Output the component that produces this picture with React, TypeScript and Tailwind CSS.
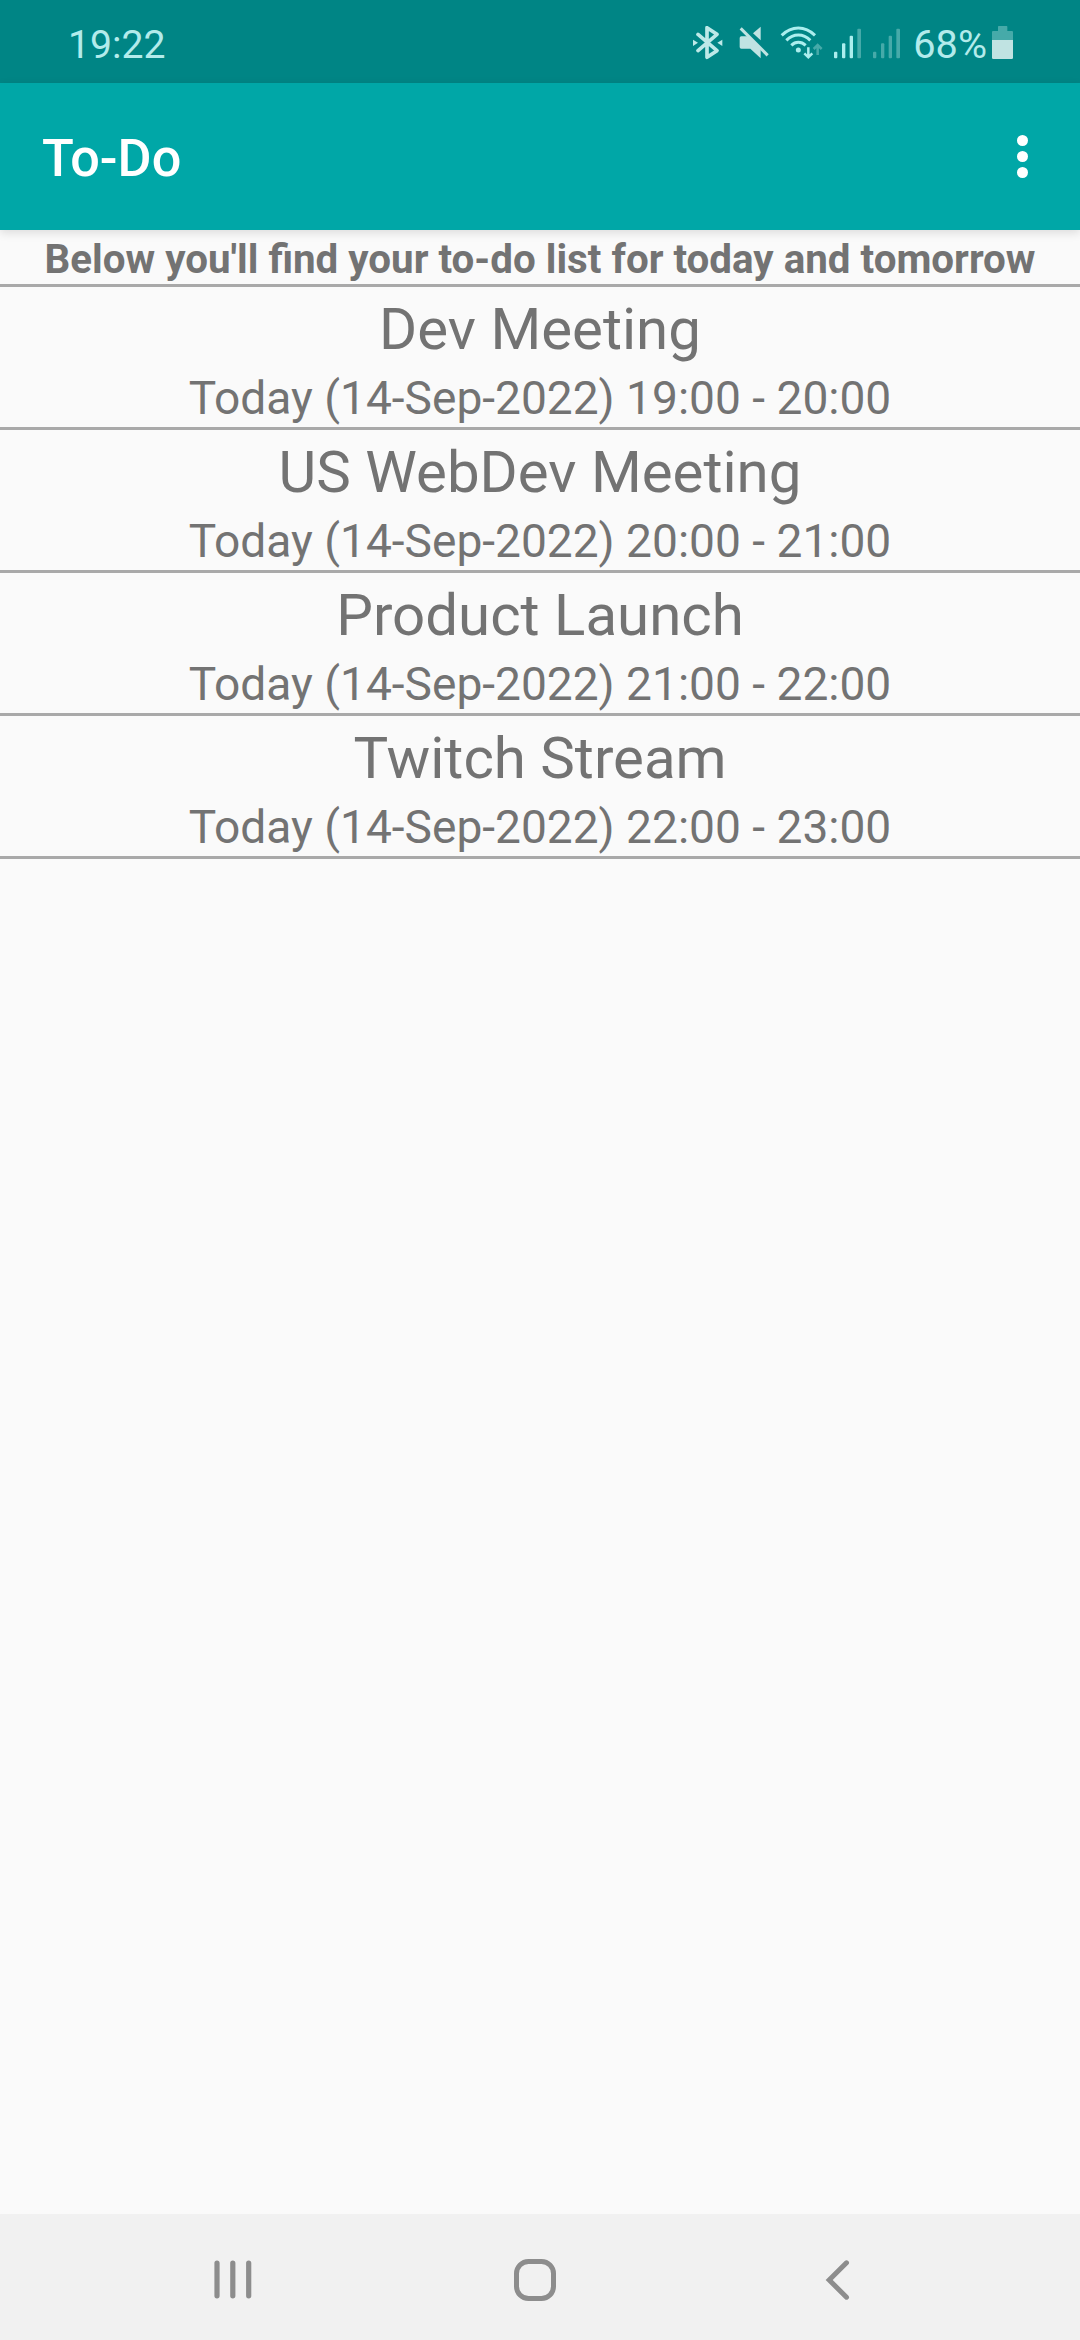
import React from 'react';

const events = [
    { title: 'Dev Meeting', time: 'Today (14-Sep-2022) 19:00 - 20:00' },
    { title: 'US WebDev Meeting', time: 'Today (14-Sep-2022) 20:00 - 21:00' },
    { title: 'Product Launch', time: 'Today (14-Sep-2022) 21:00 - 22:00' },
    { title: 'Twitch Stream', time: 'Today (14-Sep-2022) 22:00 - 23:00' },
];

const BluetoothIcon = () => (
    <svg className="h-[37px] w-[31px]" viewBox="36 48 93 111" fill="none">
        <path
            d="M54 73 L111 122 L81 142 V53 L111 73 L54 122"
            stroke="#bde9e8"
            strokeWidth="11"
            strokeLinejoin="round"
            strokeLinecap="round"
        />
        <path d="M39 89 L54 98 L39 108 Z M127 89 L112 98 L127 108 Z" fill="#bde9e8" />
    </svg>
);

const MuteIcon = () => (
    <svg className="ml-4 h-[37px] w-[30px]" viewBox="177 48 90 111" fill="#c0e3e2">
        <path d="M184 79 H204 L242 117 V145 L211 116 H184 Q179 116 179 111 V84 Q179 79 184 79 Z" />
        <path d="M242 50 V91 L219 70 Z" />
        <path d="M182 55 L263 136" stroke="#c0e3e2" strokeWidth="9" />
    </svg>
);

const WifiIcon = () => (
    <svg className="ml-[11px] h-[37px] w-[43px]" viewBox="300 48 129 111" fill="none">
        <g stroke="#abeeee" strokeWidth="9" strokeLinecap="butt">
            <path d="M305 76 Q328 54 355 54 Q382 54 405 76" />
            <path d="M319 91 Q335 75 355 75 Q375 75 391 91" />
            <path d="M334 106 Q343 97 355 97 Q367 97 377 106" />
        </g>
        <circle cx="355" cy="120" r="7.5" fill="#abeeee" />
        <path d="M385 112 V141 M373 130 L385 142 L397 130" stroke="#abeeee" strokeWidth="7.5" />
        <path d="M413 135 V107 M401 117 L413 105 L425 117" stroke="#46aaa9" strokeWidth="7.5" />
    </svg>
);

const SignalIcon = ({ active }: { active: boolean }) => {
    const on = active ? '#abeeee' : '#46aaa9';
    return (
        <svg className="ml-[10px] h-[37px] w-[29px]" viewBox="39 48 87 111">
            <rect x="42" y="125" width="10" height="20" rx="3" fill={on} />
            <rect x="66" y="100" width="10" height="45" rx="3" fill={on} />
            <rect x="89" y="77" width="10" height="68" rx="3" fill={on} />
            <rect x="112" y="56" width="11" height="89" rx="3" fill="#46aaa9" />
        </svg>
    );
};

const BatteryIcon = () => (
    <svg className="ml-1 h-[37px] w-[23px]" viewBox="513 48 69 111">
        <path d="M534 50 Q534 48 536 48 H560 Q562 48 562 50 V63 H576 Q579 63 579 66 V90 H516 V66 Q516 63 519 63 H534 Z" fill="#46aaa9" />
        <path d="M516 90 H579 V143 Q579 147 575 147 H520 Q516 147 516 143 Z" fill="#c0e3e2" />
    </svg>
);

const StatusBar = () => (
    <div className="flex h-[83px] shrink-0 items-center bg-[#008585] pt-[6px] pr-[66px] pl-[68px] text-[#b3ebeb]">
        <span className="text-[39.2px] leading-[46px]">19:22</span>
        <div className="ml-auto flex items-center">
            <BluetoothIcon />
            <MuteIcon />
            <WifiIcon />
            <SignalIcon active />
            <SignalIcon active={false} />
            <span className="ml-[12px] text-[39.7px] leading-[46px]">68%</span>
            <BatteryIcon />
        </div>
    </div>
);

const AppBar = () => (
    <header className="z-10 flex h-[147px] shrink-0 items-center justify-between bg-[#00a7a7] pr-[47px] pl-[42px] text-white shadow-[0_3px_9px_rgba(0,0,0,0.12)]">
        <h1 className="pt-[4px] text-[52.2px] leading-[62px] font-medium">To-Do</h1>
        <button className="flex w-[21px] flex-col items-center gap-[5px]">
            <span className="h-[11px] w-[11px] rounded-full bg-white" />
            <span className="h-[11px] w-[11px] rounded-full bg-white" />
            <span className="h-[11px] w-[11px] rounded-full bg-white" />
        </button>
    </header>
);

const NavBar = () => (
    <nav className="flex h-[126px] shrink-0 items-center gap-[260px] bg-[#f1f1f1] pt-[6px] pl-[212px]">
        <svg className="h-[42px] w-[42px]" viewBox="0 0 42 42" stroke="#8d8d8d" strokeWidth="5.2" strokeLinecap="round">
            <path d="M5 4 V36.8 M20.8 4 V36.8 M36.7 4 V36.8" />
        </svg>
        <svg className="h-[42px] w-[42px]" viewBox="0 0 42 42" fill="none" stroke="#8d8d8d" strokeWidth="5">
            <rect x="2.5" y="2.5" width="37" height="37" rx="12" />
        </svg>
        <svg className="h-[42px] w-[42px]" viewBox="0 0 42 42" fill="none" stroke="#8d8d8d" strokeWidth="5" strokeLinecap="round">
            <path d="M30.5 3.8 L13.2 21 L30.5 38.2" />
        </svg>
    </nav>
);

const App: React.FC = () => {
    return (
        <div className="flex h-[2340px] w-[1080px] flex-col bg-[#fafafa] font-['Roboto',sans-serif]">
            <StatusBar />
            <AppBar />

            {/* To-do list */}
            <main className="flex-1 text-center whitespace-nowrap text-[#737373]">
                <p className="h-[57px] border-b-3 border-[#a9a9a9] pt-[5px] text-[40.35px] leading-[50px] font-bold">
                    Below you'll find your to-do list for today and tomorrow
                </p>
                {events.map((event) => (
                    <div key={event.title} className="h-[143px] border-b-3 border-[#a9a9a9]">
                        <div className="text-[58.2px] leading-[84px]">{event.title}</div>
                        <div className="text-[46.1px] leading-[54px]">{event.time}</div>
                    </div>
                ))}
            </main>

            <NavBar />
        </div>
    );
};

export default App;
